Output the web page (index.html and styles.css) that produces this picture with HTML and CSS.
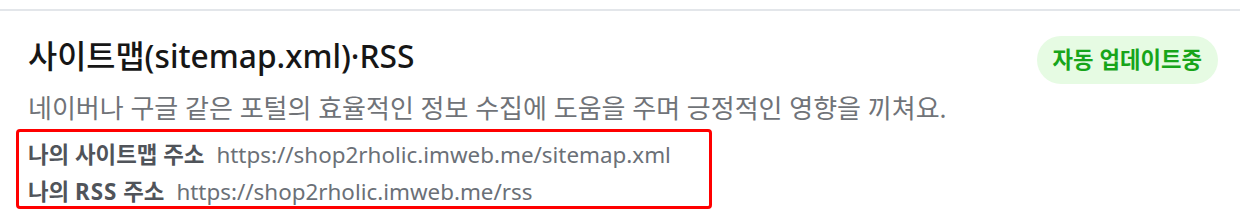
FILE: index.html
```html
<!DOCTYPE html>
<html lang="ko">
<head>
<meta charset="utf-8">
<link rel="stylesheet" href="styles.css">
</head>
<body>
<div class="divider"></div>
<section class="card">
  <div class="head">
    <div class="head-text">
      <h2 class="title">사이트맵(sitemap.xml)·RSS</h2>
      <p class="desc">네이버나 구글 같은 포털의 효율적인 정보 수집에 도움을 주며 긍정적인 영향을 끼쳐요.</p>
    </div>
    <span class="badge">자동 업데이트중</span>
  </div>
  <div class="links">
    <div class="row"><span class="label">나의 사이트맵 주소</span><span class="url">https://shop2rholic.imweb.me/sitemap.xml</span></div>
    <div class="row"><span class="label">나의 <span class="latin">RSS</span> 주소</span><span class="url">https://shop2rholic.imweb.me/rss</span></div>
  </div>
</section>
</body>
</html>
```
FILE: styles.css
```css
html, body {
  margin: 0;
  padding: 0;
  background: #ffffff;
}
body {
  font-family: "Noto Sans", "Noto Sans CJK KR", sans-serif;
  width: 1240px;
  height: 214px;
  overflow: hidden;
}
.divider {
  margin-top: 9px;
  height: 2px;
  background: #e3e6ea;
}
.card {
  padding: 0 22px 0 28px;
}
.head {
  display: flex;
  justify-content: space-between;
  align-items: flex-start;
}
.title {
  margin: 25px 0 0;
  font-size: 31.7px;
  font-weight: 500;
  line-height: 40px;
  color: #161616;
}
.desc {
  margin: 15px 0 0;
  font-size: 26px;
  line-height: 34px;
  color: #707378;
}
.badge {
  margin-top: 25px;
  height: 48px;
  padding: 0 16px;
  border-radius: 24px;
  background: #e6fbe3;
  color: #17a51a;
  font-size: 22.3px;
  font-weight: 700;
  line-height: 48px;
}
.links {
  box-sizing: border-box;
  margin: 4px 0 0 -12px;
  width: 696px;
  height: 80px;
  padding: 4px 9px 0 9px;
  border: 3px solid #ff0000;
  border-radius: 4px;
}
.row {
  display: flex;
  gap: 12px;
  line-height: 37px;
  font-size: 22.4px;
}
.label {
  font-weight: 700;
  color: #50545a;
}
.latin {
  letter-spacing: 1px;
}
.url {
  color: #6b7077;
}
```
